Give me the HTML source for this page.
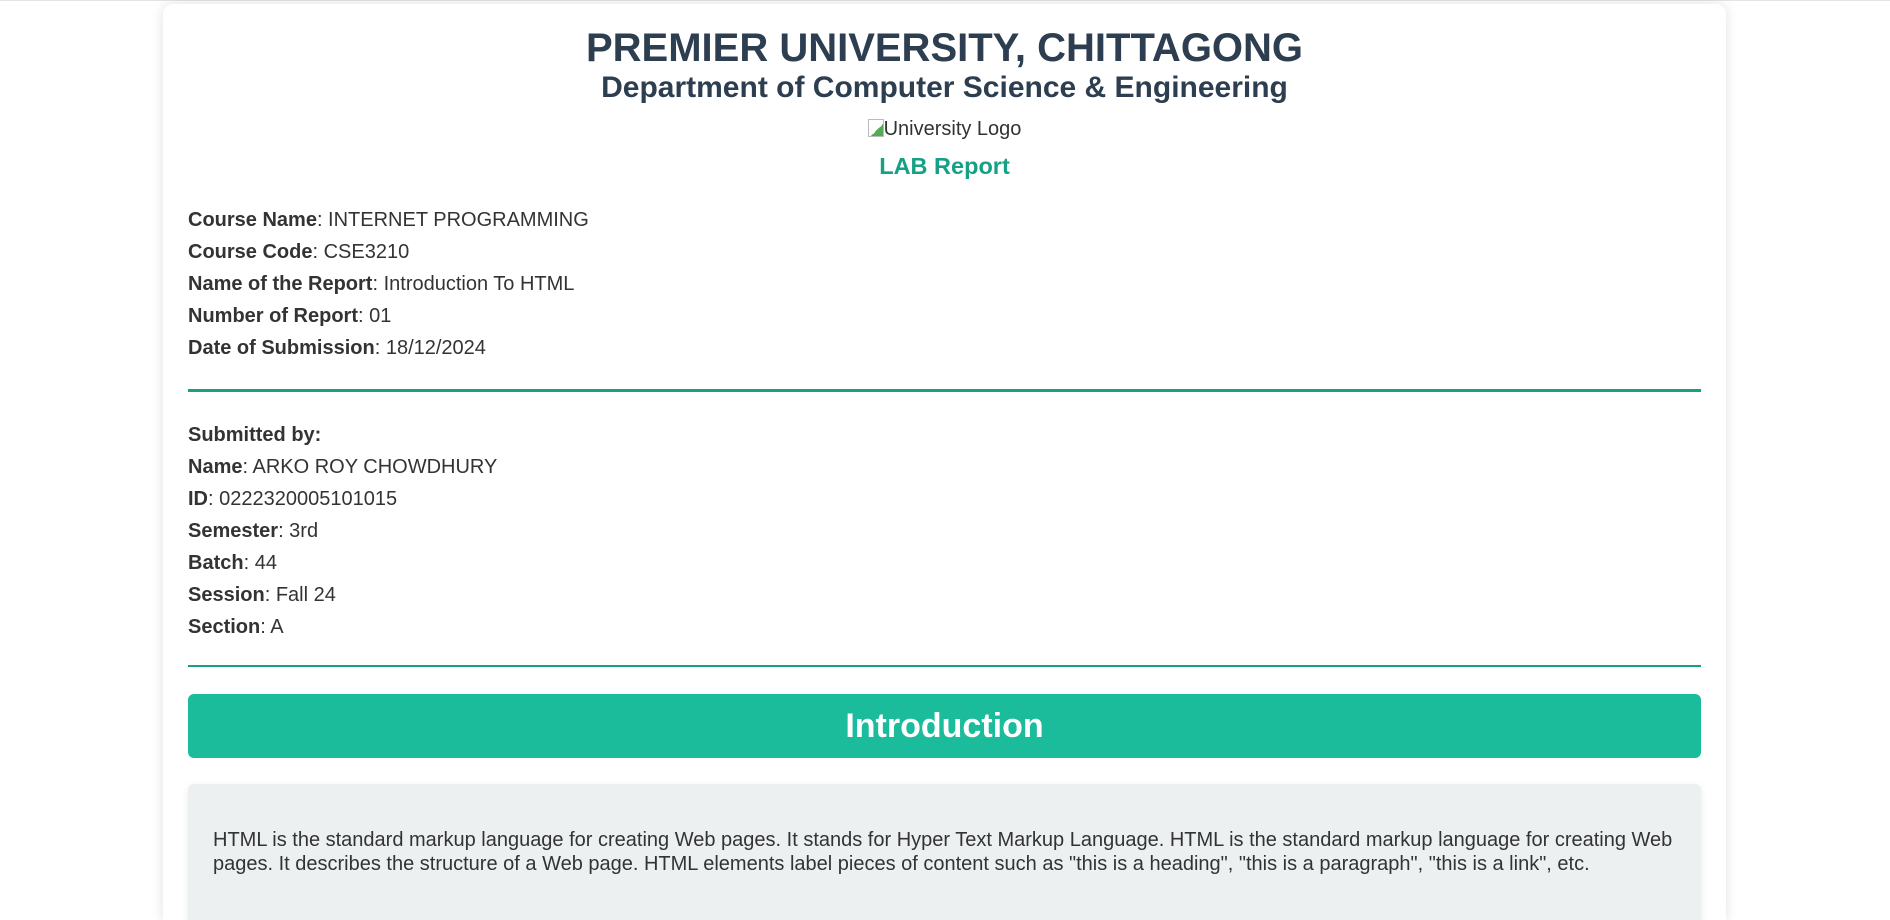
<!DOCTYPE html>
<html><head><meta charset="utf-8"><style>
html,body{margin:0;padding:0;background:#fff;width:1890px;height:920px;overflow:hidden;font-family:"Liberation Sans",Arial,sans-serif;color:#333;}
body{border-top:1px solid #e4e4e4;box-sizing:border-box;position:relative;}
.card{position:absolute;left:163px;top:3px;width:1563px;height:917px;overflow:hidden;background:#fff;border-radius:10px 10px 0 0;box-shadow:0 0 12px rgba(0,0,0,0.12);}
h1{position:absolute;left:0;width:100%;top:21px;margin:0;text-align:center;font-size:40px;line-height:46px;color:#2c3e50;}
h2{position:absolute;left:0;width:100%;top:67px;margin:0;text-align:center;font-size:30px;line-height:34px;color:#2c3e50;}
.logo{position:absolute;left:0;width:100%;top:113px;text-align:center;font-size:20px;line-height:24px;color:#333;}
.lab{position:absolute;left:0;width:100%;top:148px;text-align:center;font-size:23.5px;line-height:28px;font-weight:bold;color:#16a085;}
.line{position:absolute;left:25px;font-size:20px;line-height:24px;white-space:nowrap;}
.hr{position:absolute;left:25px;width:1513px;height:3px;background:#16a085;}
.intro{position:absolute;left:25px;top:690px;width:1513px;height:64px;background:#1abc9c;border-radius:6px;color:#fff;font-weight:bold;font-size:34px;line-height:64px;text-align:center;}
.box{position:absolute;left:25px;top:780px;width:1513px;height:300px;background:#ecf0f1;border-radius:6px;box-shadow:0 2px 8px rgba(0,0,0,0.08);}
.box p{margin:0;position:absolute;left:25px;right:25px;top:44px;font-size:20px;line-height:24px;color:#333;}
</style></head><body>
<div class="card">
<h1>PREMIER UNIVERSITY, CHITTAGONG</h1>
<h2>Department of Computer Science &amp; Engineering</h2>
<div class="logo"><span style="display:inline-block;width:14px;height:16px;border:1px solid #bbb;vertical-align:-2px;background:linear-gradient(135deg,#fff 60%,#5a5 60%)"></span>University Logo</div>
<div class="lab">LAB Report</div>
<div class="line" style="top:204px"><b>Course Name</b>: INTERNET PROGRAMMING</div>
<div class="line" style="top:236px"><b>Course Code</b>: CSE3210</div>
<div class="line" style="top:268px"><b>Name of the Report</b>: Introduction To HTML</div>
<div class="line" style="top:300px"><b>Number of Report</b>: 01</div>
<div class="line" style="top:332px"><b>Date of Submission</b>: 18/12/2024</div>
<div class="hr" style="top:385px"></div>
<div class="line" style="top:419px"><b>Submitted by:</b></div>
<div class="line" style="top:451px"><b>Name</b>: ARKO ROY CHOWDHURY</div>
<div class="line" style="top:483px"><b>ID</b>: 0222320005101015</div>
<div class="line" style="top:515px"><b>Semester</b>: 3rd</div>
<div class="line" style="top:547px"><b>Batch</b>: 44</div>
<div class="line" style="top:579px"><b>Session</b>: Fall 24</div>
<div class="line" style="top:611px"><b>Section</b>: A</div>
<div class="hr" style="top:661px;height:2px"></div>
<div class="intro">Introduction</div>
<div class="box"><p>HTML is the standard markup language for creating Web pages. It stands for Hyper Text Markup Language. HTML is the standard markup language for creating Web pages. It describes the structure of a Web page. HTML elements label pieces of content such as "this is a heading", "this is a paragraph", "this is a link", etc.</p></div>
</div>
</body></html>
